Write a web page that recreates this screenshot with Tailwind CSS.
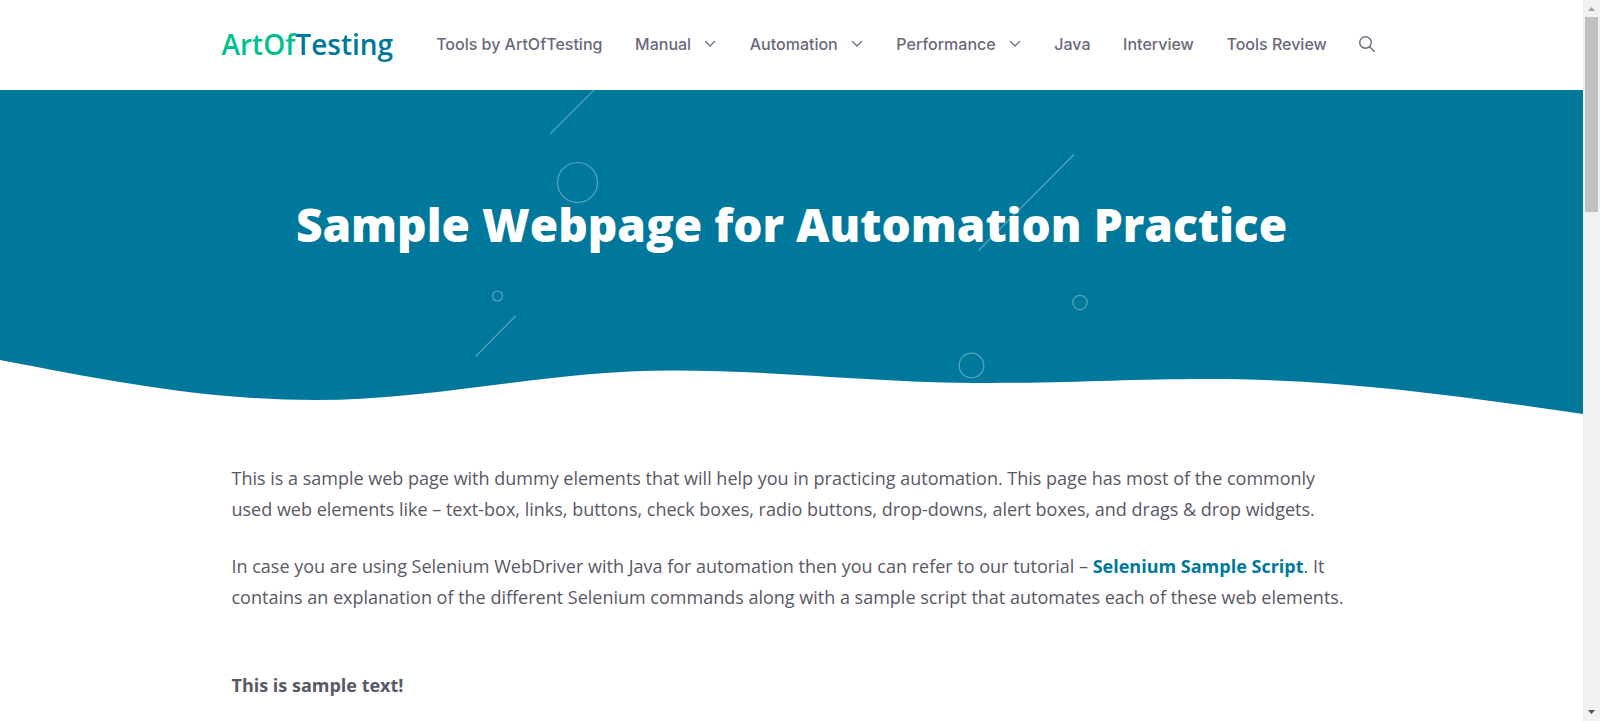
<!DOCTYPE html>
<html lang="en">
<head>
<meta charset="utf-8">
<meta name="viewport" content="width=device-width, initial-scale=1">
<title>Sample Webpage for Automation Practice - ArtOfTesting</title>
<script src="https://cdn.jsdelivr.net/npm/@tailwindcss/browser@4"></script>
</head>
<body class="flex h-screen overflow-hidden bg-white font-['Open_Sans',sans-serif] text-[18px] text-[#5a5766]">
  <div class="h-full min-w-0 flex-1 overflow-hidden">
    <header class="bg-white">
      <div class="mx-auto flex h-[90px] max-w-[1200px] items-center pr-4 pl-[30px]">
        <a href="#" class="mr-[43px] pb-0.5 text-[28px] leading-9 font-semibold text-[#00789b]"><span class="text-[#00bf8f]">ArtOf</span>Testing</a>
        <nav aria-label="Primary" class="flex flex-1 items-center justify-between pb-0.5 font-['Inter',sans-serif] text-base font-medium whitespace-nowrap text-[#6b687c]">
          <a href="#">Tools by ArtOfTesting</a>
          <a href="#" class="flex items-center gap-3">Manual
            <svg class="size-3.5" viewBox="0 0 14 14" fill="none" stroke="currentColor" stroke-width="1.2" stroke-linecap="round" stroke-linejoin="round" aria-hidden="true"><path d="M2.500 4.500 7 9 11.500 4.500"/></svg></a>
          <a href="#" class="flex items-center gap-3">Automation
            <svg class="size-3.5" viewBox="0 0 14 14" fill="none" stroke="currentColor" stroke-width="1.2" stroke-linecap="round" stroke-linejoin="round" aria-hidden="true"><path d="M2.500 4.500 7 9 11.500 4.500"/></svg></a>
          <a href="#" class="flex items-center gap-3">Performance
            <svg class="size-3.5" viewBox="0 0 14 14" fill="none" stroke="currentColor" stroke-width="1.2" stroke-linecap="round" stroke-linejoin="round" aria-hidden="true"><path d="M2.500 4.500 7 9 11.500 4.500"/></svg></a>
          <a href="#">Java</a>
          <a href="#">Interview</a>
          <a href="#">Tools Review</a>
          <button type="button" aria-label="Open search"><svg class="block size-4" viewBox="0 0 16 16" fill="none" stroke="currentColor" stroke-width="1.4" stroke-linecap="round" aria-hidden="true"><circle cx="6.5" cy="6.5" r="5.8"/><path d="M10.8 10.8 15.4 15.4"/></svg></button>
        </nav>
      </div>
    </header>

    <section class="relative flex h-[324px] justify-center overflow-hidden bg-[#00789b] pt-[102px]">
      <!-- Decorative lines and circles -->
      <svg class="absolute top-0 left-1/2 h-[324px] w-[700px] -translate-x-1/2" viewBox="442 90 700 324" fill="none" stroke="#ffffff" stroke-opacity="0.35" stroke-width="1.2" aria-hidden="true">
        <path d="M550.5 133.500 595 89M475.500 356.500 515.500 316M1074 154.500 978.500 250.500"/>
        <circle cx="577.500" cy="182.500" r="20"/>
        <circle cx="497.500" cy="296" r="5"/>
        <circle cx="1080" cy="302.500" r="7.200"/>
        <circle cx="971.500" cy="365.500" r="12.300"/>
      </svg>
      <!-- Wave along the lower edge -->
      <svg class="absolute bottom-0 left-0 h-[54px] w-full" viewBox="0 360 1583 54" preserveAspectRatio="none" fill="#ffffff" aria-hidden="true">
        <path d="M0 360C110 381 205 400 315 400C437 400 545 370.500 673 370.500C780 370.500 870 383 989 383C1070 383 1130 379 1208 379C1340 379 1460 396 1583 414L1583 415L0 415Z"/>
      </svg>
      <h1 class="relative text-center text-[46px] leading-[64px] font-extrabold text-white">Sample Webpage for Automation Practice</h1>
    </section>

    <main class="mx-auto max-w-[1200px] px-10 pt-[49px] leading-[31px]">
      <p class="mb-[26px]">This is a sample web page with dummy elements that will help you in practicing automation. This page has most of the commonly<br>used web elements like – text-box, links, buttons, check boxes, radio buttons, drop-downs, alert boxes, and drags &amp; drop widgets.</p>
      <p class="mb-[57px]">In case you are using Selenium WebDriver with Java for automation then you can refer to our tutorial – <a href="#" class="font-bold text-[#00789b]">Selenium Sample Script</a>. It<br>contains an explanation of the different Selenium commands along with a sample script that automates each of these web elements.</p>
      <p class="font-bold">This is sample text!</p>
    </main>
  </div>

  <!-- Window scrollbar -->
  <aside aria-label="Scrollbar" class="flex w-[17px] shrink-0 flex-col items-center bg-[#f1f1f1]">
    <svg class="h-[17px] w-[17px] shrink-0" viewBox="0 0 17 17" fill="#a3a3a3" aria-hidden="true"><path d="M5 11 8.500 7 12 11Z"/></svg>
    <div class="h-[27%] w-[13px] bg-[#c1c1c1]"></div>
    <svg class="mt-auto h-[17px] w-[17px] shrink-0" viewBox="0 0 17 17" fill="#505050" aria-hidden="true"><path d="M5 6 8.500 10 12 6Z"/></svg>
  </aside>
</body>
</html>
